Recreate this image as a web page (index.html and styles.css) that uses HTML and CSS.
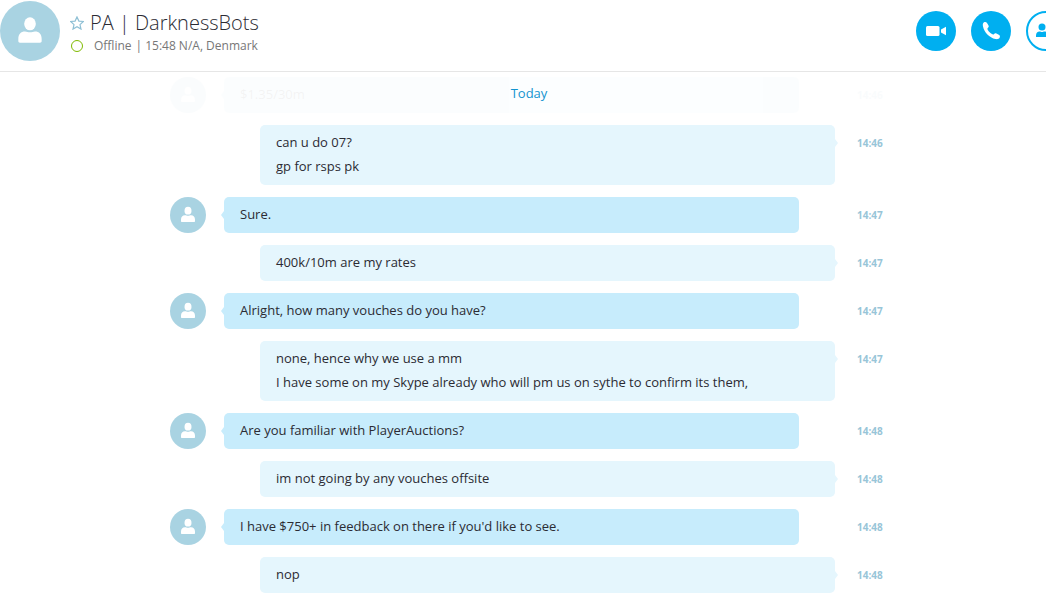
FILE: index.html
```html
<!DOCTYPE html>
<html lang="en">
<head>
    <meta charset="UTF-8">
    <meta name="viewport" content="width=device-width, initial-scale=1.0">
    <title>PA | DarknessBots</title>
    <link rel="stylesheet" href="styles.css">
</head>
<body>
    <svg class="symbols" aria-hidden="true">
        <symbol id="person" viewBox="0 0 36 36">
            <ellipse cx="18" cy="13.700" rx="3.500" ry="3.900"/>
            <path d="M12 25c-.7 0-1-.3-1-1v-1.200c0-2.900 1.500-4.500 4-4.500 1.100 0 1.800.5 3 .5s1.900-.5 3-.5c2.500 0 4 1.600 4 4.500V24c0 .7-.3 1-1 1z"/>
        </symbol>
    </svg>

    <header class="header">
        <span class="avatar avatar-large"><svg><use href="#person"/></svg></span>
        <div class="contact">
            <div class="name-line">
                <svg class="star" viewBox="0 0 14 14"><path d="M7 .9l1.900 4.200 4.500.4-3.400 3.100 1 4.500L7 10.800l-4 2.300 1-4.500L.6 5.500l4.500-.4z"/></svg>
                <h1>PA | DarknessBots</h1>
            </div>
            <div class="status-line">
                <span class="status-dot"></span>
                <span>Offline</span>
                <span class="divider">|</span>
                <span>15:48 N/A, Denmark</span>
            </div>
        </div>
        <div class="actions">
            <button type="button" aria-label="Video call">
                <svg viewBox="0 0 40 40"><rect x="10" y="15" width="13.500" height="10" rx="1.500"/><path d="M25 18.600l5-2.900v8.600l-5-2.900z"/></svg>
            </button>
            <button type="button" aria-label="Call">
                <svg viewBox="0 0 40 40"><path d="M13 11.300c1.300-.8 2.300-.3 3 .8l1.500 2.400c.5 1 .2 1.700-.5 2.300-.8.700-.7 1.200-.2 2.100 1 1.700 2.500 3.200 4.200 4.200.9.500 1.400.5 2.100-.2.600-.7 1.300-1 2.300-.5l2.400 1.400c1.100.7 1.500 1.700.8 2.900-.8 1.300-2.300 1.700-4.100 1.300-6.200-1.500-11.200-6.500-12.500-12.600-.4-1.800-.2-3.200 1-4.100z"/></svg>
            </button>
            <button type="button" class="outline" aria-label="Add people">
                <svg viewBox="2 2 36 36"><circle cx="16" cy="16" r="3.500"/><path d="M10 26v-1.500c0-2.500 1.500-4 3.500-4 1 0 1.500.5 2.500.5s1.500-.5 2.500-.5c2 0 3.500 1.500 3.500 4V26zM25 19h2v-2h2v2h2v2h-2v2h-2v-2h-2z"/></svg>
            </button>
        </div>
    </header>

    <main class="chat">
        <div class="day">Today</div>

        <div class="message incoming faded">
            <span class="avatar"><svg><use href="#person"/></svg></span>
            <div class="bubble">$1.35/30m</div>
            <time>14:46</time>
        </div>
        <div class="message outgoing">
            <div class="bubble">can u do 07?<br>gp for rsps pk</div>
            <time>14:46</time>
        </div>
        <div class="message incoming">
            <span class="avatar"><svg><use href="#person"/></svg></span>
            <div class="bubble">Sure.</div>
            <time>14:47</time>
        </div>
        <div class="message outgoing">
            <div class="bubble">400k/10m are my rates</div>
            <time>14:47</time>
        </div>
        <div class="message incoming">
            <span class="avatar"><svg><use href="#person"/></svg></span>
            <div class="bubble">Alright, how many vouches do you have?</div>
            <time>14:47</time>
        </div>
        <div class="message outgoing">
            <div class="bubble">none, hence why we use a mm<br>I have some on my Skype already who will pm us on sythe to confirm its them,</div>
            <time>14:47</time>
        </div>
        <div class="message incoming">
            <span class="avatar"><svg><use href="#person"/></svg></span>
            <div class="bubble">Are you familiar with PlayerAuctions?</div>
            <time>14:48</time>
        </div>
        <div class="message outgoing">
            <div class="bubble">im not going by any vouches offsite</div>
            <time>14:48</time>
        </div>
        <div class="message incoming">
            <span class="avatar"><svg><use href="#person"/></svg></span>
            <div class="bubble">I have $750+ in feedback on there if you'd like to see.</div>
            <time>14:48</time>
        </div>
        <div class="message outgoing">
            <div class="bubble">nop</div>
            <time>14:48</time>
        </div>
    </main>
</body>
</html>
```
FILE: styles.css
```css
* {
    box-sizing: border-box;
}

body {
    margin: 0;
    background-color: #fff;
    color: #2b2b33;
    font-family: "Open Sans", "Noto Sans", sans-serif;
    font-size: 13px;
    line-height: 24px;
}

.symbols {
    display: none;
}

.header {
    display: flex;
    align-items: flex-start;
    height: 72px;
    border-bottom: 1px solid #e6e6e6;
    overflow: hidden;
}

.avatar {
    width: 36px;
    height: 36px;
    border-radius: 50%;
    background-color: #a9d3e2;
    flex: none;
}

.avatar svg {
    display: block;
    width: 100%;
    height: 100%;
    fill: #fff;
}

.avatar-large {
    width: 60px;
    height: 60px;
    margin-top: 1px;
}

.contact {
    padding: 9px 0 0 10px;
}

.name-line,
.status-line {
    display: flex;
    align-items: center;
    white-space: nowrap;
}

.name-line {
    height: 28px;
    gap: 6px;
}

.star {
    width: 14px;
    height: 14px;
    fill: none;
    stroke: #8fc0d5;
    stroke-width: 1.2;
}

h1 {
    margin: 0;
    font-size: 20px;
    font-weight: 300;
    line-height: 28px;
}

.status-line {
    height: 18px;
    color: #777;
    font-size: 12px;
}

.status-dot {
    width: 12px;
    height: 12px;
    margin: 0 11px 0 1px;
    border: 1px solid #7fba00;
    border-radius: 50%;
}

.divider {
    margin: 0 3px 0 4px;
}

.actions {
    display: flex;
    gap: 15px;
    margin: 11px -20px 0 auto;
}

.actions button {
    width: 40px;
    height: 40px;
    padding: 0;
    border: none;
    border-radius: 50%;
    background-color: #00aff0;
    cursor: pointer;
}

.actions svg {
    display: block;
    width: 100%;
    height: 100%;
    fill: #fff;
}

.actions .outline {
    border: 2px solid #00aff0;
    background-color: #fff;
}

.actions .outline svg {
    fill: #00aff0;
}

.chat {
    position: relative;
    display: flex;
    flex-direction: column;
    gap: 12px;
    padding: 5px 162px 20px 170px;
}

.day {
    position: absolute;
    top: 9px;
    left: 0;
    right: 0;
    padding-left: 12px;
    text-align: center;
    color: #1494cf;
    z-index: 1;
}

.message {
    display: grid;
    grid-template-columns: 36px 1fr 27px;
    align-items: start;
}

.faded {
    opacity: 0.05;
}

.bubble {
    position: relative;
    grid-column: 2;
    padding: 5px 16px 7px;
    border-radius: 5px;
}

.incoming .bubble {
    margin: 0 58px 0 18px;
    background-color: #c7ecfc;
}

.outgoing .bubble {
    margin: 0 22px 0 54px;
    background-color: #e5f6fd;
}

.bubble::before {
    content: "";
    position: absolute;
    top: 14px;
    border: solid transparent;
    border-width: 4px 0;
}

.incoming .bubble::before {
    left: -3px;
    border-right: 3px solid #c7ecfc;
}

.outgoing .bubble::before {
    right: -3px;
    border-left: 3px solid #e5f6fd;
}

time {
    grid-column: 3;
    padding-top: 6px;
    color: #98c5d8;
    font-size: 10px;
    font-weight: bold;
}
```
